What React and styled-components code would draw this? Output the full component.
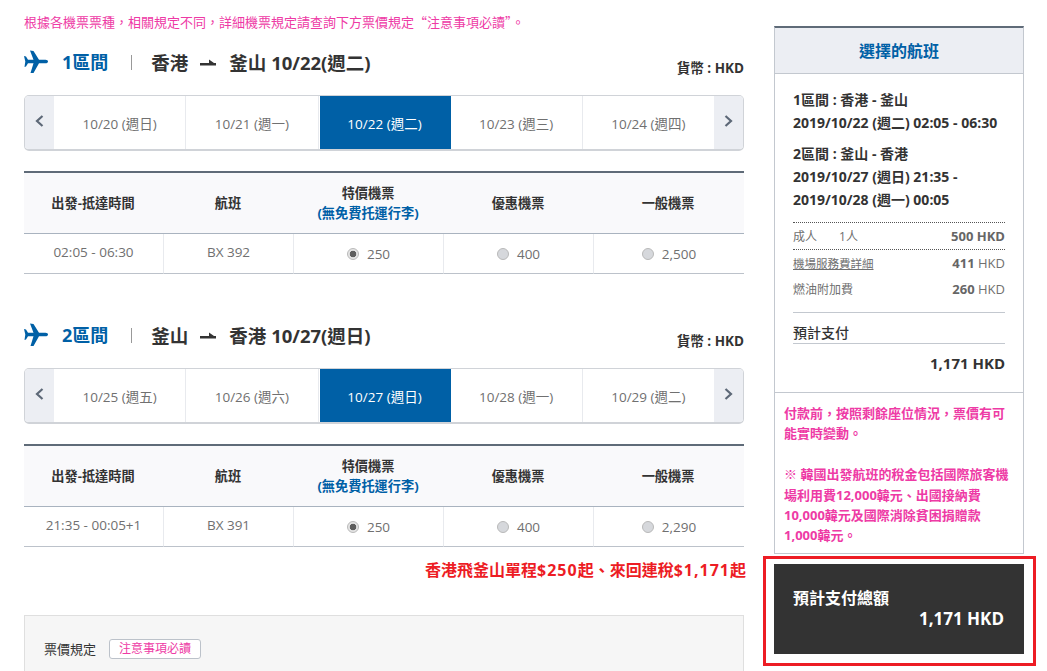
import React from "react";
import styled, { createGlobalStyle } from "styled-components";

const Global = createGlobalStyle`
  html, body { margin: 0; padding: 0; background: #fff; height: 671px; overflow: hidden; }
  body { font-family: "Open Sans", "Noto Sans CJK TC", sans-serif; color: #333; }
  * { box-sizing: border-box; }
`;

const Page = styled.div`
  display: flex;
  align-items: flex-start;
  width: 1047px;
  height: 671px;
  overflow: hidden;
  padding: 0 11px 0 24px;
`;
const Main = styled.main`
  width: 720px;
  flex: none;
`;
const Notice = styled.p`
  margin: 12px 0 0;
  font-family: "Noto Sans CJK TC", sans-serif;
  font-size: 13px;
  line-height: 19px;
  color: #ee3aa5;
`;
const Section = styled.section`
  margin-top: ${(p) => p.$top}px;
`;
const Head = styled.div`
  display: flex;
  align-items: center;
  height: 30px;
`;
const PlaneIcon = styled.svg`
  width: 25px;
  height: 24px;
  flex: none;
  color: #0060a6;
`;
const Segment = styled.h2`
  margin: 0 0 0 13px;
  font-size: 18px;
  line-height: 30px;
  font-weight: 700;
  color: #0060a6;
`;
const Divider = styled.span`
  width: 1px;
  height: 15px;
  margin: 0 19px 0 23px;
  background: #999;
`;
const Route = styled.div`
  display: flex;
  align-items: center;
  font-size: 18.5px;
  font-weight: 700;
  color: #333;
`;
const ArrowIcon = styled.svg`
  width: 16px;
  height: 7px;
  margin: 0 13px 0 12px;
`;
const Currency = styled.div`
  margin: -18px 0 0;
  text-align: right;
  font-size: 13.5px;
  line-height: 18px;
  font-weight: 700;
  color: #333;
`;
const DateBar = styled.div`
  display: flex;
  height: 56px;
  margin-top: 18px;
  border: 1px solid #d0d3d8;
  border-bottom-width: 2px;
  border-radius: 5px;
  overflow: hidden;
  background: #fff;
`;
const Nav = styled.div`
  width: 29px;
  flex: none;
  display: flex;
  align-items: center;
  justify-content: center;
  background: #eceef3;
  color: #5d6877;
  padding-bottom: 3px;
`;
const DateCell = styled.div`
  flex: ${(p) => (p.$active ? "0 0 131px" : "1")};
  margin-left: ${(p) => (p.$active ? "1px" : "0")};
  display: flex;
  align-items: center;
  justify-content: center;
  font-size: 13.5px;
  color: ${(p) => (p.$active ? "#fff" : "#707070")};
  background: ${(p) => (p.$active ? "#0060a6" : "#fff")};
  border-right: 1px solid ${(p) => (p.$active ? "#0060a6" : "#e8eaee")};
  &:nth-last-child(2) { border-right: 0; }
`;
const Table = styled.div`
  margin-top: 20px;
  border-top: 2px solid #5f6b78;
  display: grid;
  grid-template-columns: 140px 130px 150px 150px 150px;
`;
const HeadCell = styled.div`
  height: 61px;
  padding-right: 2px;
  display: flex;
  flex-direction: column;
  align-items: center;
  justify-content: center;
  background: #f9f9fb;
  border-bottom: 1px solid #a9b3bf;
  font-size: 13.2px;
  line-height: 20px;
  font-weight: 700;
  color: #333;
`;
const SubNote = styled.span`
  color: #0060a6;
  font-weight: 700;
`;
const Cell = styled.div`
  height: 40px;
  display: flex;
  align-items: center;
  justify-content: center;
  gap: 8px;
  font-size: 13.5px;
  color: #707070;
  border-bottom: 1px solid #bcc2ca;
  border-right: 1px solid #e8eaee;
  &:last-child { border-right: 0; }
`;
const CellText = styled.span`
  position: relative;
  top: ${(p) => p.$shift || 0}px;
`;
const Radio = styled.span`
  width: 12px;
  height: 12px;
  border-radius: 50%;
  flex: none;
  background: ${(p) => (p.$on ? "radial-gradient(circle, #5e5e5e 0 3px, #e4e4e4 3.6px)" : "#d6d8dc")};
  border: 1px solid #b9b9b9;
`;
const Promo = styled.div`
  margin-top: 11px;
  margin-right: -2px;
  text-align: right;
  font-size: 16px;
  line-height: 24px;
  font-weight: 700;
  color: #ed1c24;
`;
const Money = styled.span`
  letter-spacing: 1px;
`;
const RuleBox = styled.div`
  display: flex;
  align-items: center;
  height: 120px;
  margin-top: 33px;
  padding: 15px 20px 68px 19px;
  background: #f6f6f6;
  border: 1px solid #dfdfdf;
  font-size: 13px;
  line-height: 20px;
  color: #333;
`;
const RuleLink = styled.span`
  display: inline-flex;
  align-items: center;
  height: 20px;
  margin-left: 13px;
  padding: 0 9px;
  background: #fff;
  border: 1px solid #bcc2ca;
  border-radius: 3px;
  color: #ee3aa5;
  font-size: 12px;
`;
const Aside = styled.aside`
  width: 273px;
  margin-left: 19px;
  flex: none;
  padding-top: 26px;
`;
const Card = styled.div`
  margin: 0 12px 0 11px;
  height: 528px;
  border: 1px solid #c3c8cf;
  border-top: 2px solid #5f6b78;
`;
const CardTitle = styled.h3`
  margin: 0;
  height: 46px;
  padding-bottom: 2px;
  display: flex;
  align-items: center;
  justify-content: center;
  background: #eceef3;
  border-bottom: 1px solid #c3c8cf;
  font-size: 16px;
  font-weight: 700;
  color: #0060a6;
`;
const CardBody = styled.div`
  padding: 14px 18px 0;
  height: 319px;
  border-bottom: 1px solid #c3c8cf;
`;
const Trip = styled.div`
  margin-bottom: 8px;
  font-size: 14px;
  line-height: 23px;
  font-weight: 700;
  color: #333;
  white-space: nowrap;
`;
const FareTop = styled.div`
  display: flex;
  align-items: center;
  justify-content: space-between;
  height: 28px;
  margin-top: 11px;
  border-top: 1px dotted #555;
  border-bottom: 1px dotted #555;
  font-size: 12px;
  color: #707070;
`;
const FareRow = styled.div`
  display: flex;
  align-items: center;
  justify-content: space-between;
  height: 26px;
  font-size: 12px;
  color: #707070;
`;
const Adult = styled.span`
  display: inline-flex;
  gap: 22px;
`;
const Amount = styled.span`
  font-size: 13px;
`;
const Strong = styled.b`
  font-weight: 700;
  color: #666;
`;
const Linked = styled.span`
  font-size: 11.5px;
  text-decoration: underline;
`;
const SubtotalLabel = styled.div`
  margin-top: 10px;
  padding-top: 10px;
  height: 32px;
  border-top: 1px solid #c3c8cf;
  border-bottom: 1px solid #c3c8cf;
  font-size: 14px;
  line-height: 20px;
  font-weight: 500;
  color: #333;
`;
const SubtotalValue = styled.div`
  margin-top: 8px;
  text-align: right;
  font-size: 15px;
  line-height: 22px;
  font-weight: 700;
  color: #333;
`;
const Warn = styled.div`
  padding: 10px 9px 0;
  font-size: 13px;
  line-height: 20.2px;
  font-weight: 700;
  color: #ee3aa5;
`;
const WarnGap = styled.p`
  margin: 0 0 21px;
  width: 226px;
`;
const WarnLast = styled.p`
  margin: 0;
  width: 226px;
`;
const TotalFrame = styled.div`
  margin-top: 2px;
  height: 110px;
  padding: 5px 9px 0 8px;
  border: 3px solid #ed1c24;
`;
const TotalBox = styled.div`
  height: 90px;
  padding: 22px 20px 0 19px;
  background: #333;
  color: #fff;
  font-weight: 700;
`;
const TotalLabel = styled.div`
  font-size: 16px;
  line-height: 24px;
`;
const TotalValue = styled.div`
  margin-top: -2px;
  text-align: right;
  font-size: 17px;
  line-height: 22px;
`;

const Plane = () => (
  <PlaneIcon viewBox="0 0 25 24" fill="currentColor">
    <path d="M6 0.5 L9.5 1 L15 9.7 L21.5 9.7 C23 9.7 24 10.5 24 11.5 C24 12.5 23 13.3 21.5 13.3 L15 13.3 L9.5 23 L6.5 23 L9.5 13.3 L4 13.3 L2 16.5 L0.5 17 L1.3 11.5 L0 6 L2 6.5 L4 9.7 L9.5 9.7 Z" />
  </PlaneIcon>
);
const Arrow = () => (
  <ArrowIcon viewBox="0 0 16 7" fill="#333">
    <path d="M0 4 H9 V0.5 L14 4 H16 V6.5 H0 Z" />
  </ArrowIcon>
);
const Chevron = ({ dir }) => (
  <svg width="9" height="12" viewBox="0 0 9 12" fill="none" stroke="currentColor" strokeWidth="2.2">
    <path d={dir === "left" ? "M7.5 1 L2 6 L7.5 11" : "M1.5 1 L7 6 L1.5 11"} />
  </svg>
);

const Leg = ({ top, n, from, to, date, dates, active, time, flight, prices }) => (
  <Section $top={top}>
    <Head>
      <Plane />
      <Segment>{n}區間</Segment>
      <Divider />
      <Route>
        {from}
        <Arrow />
        {to} {date}
      </Route>
    </Head>
    <Currency>貨幣 : HKD</Currency>
    <DateBar>
      <Nav><Chevron dir="left" /></Nav>
      {dates.map((d, i) => (
        <DateCell key={d} $active={i === active}>{d}</DateCell>
      ))}
      <Nav><Chevron dir="right" /></Nav>
    </DateBar>
    <Table>
      <HeadCell>出發-抵達時間</HeadCell>
      <HeadCell>航班</HeadCell>
      <HeadCell>
        特價機票
        <SubNote>(無免費托運行李)</SubNote>
      </HeadCell>
      <HeadCell>優惠機票</HeadCell>
      <HeadCell>一般機票</HeadCell>
      <Cell><CellText $shift={-2}>{time}</CellText></Cell>
      <Cell><CellText $shift={-2}>{flight}</CellText></Cell>
      {prices.map((p, i) => (
        <Cell key={p}>
          <Radio $on={i === 0} />
          <CellText>{p}</CellText>
        </Cell>
      ))}
    </Table>
  </Section>
);

export default function App() {
  return (
    <Page>
      <Global />
      <Main>
        <Notice>根據各機票票種，相關規定不同，詳細機票規定請查詢下方票價規定“注意事項必讀”。</Notice>
        <Leg
          top={16}
          n={1}
          from="香港"
          to="釜山"
          date="10/22(週二)"
          dates={["10/20 (週日)", "10/21 (週一)", "10/22 (週二)", "10/23 (週三)", "10/24 (週四)"]}
          active={2}
          time="02:05 - 06:30"
          flight="BX 392"
          prices={["250", "400", "2,500"]}
        />
        <Leg
          top={46}
          n={2}
          from="釜山"
          to="香港"
          date="10/27(週日)"
          dates={["10/25 (週五)", "10/26 (週六)", "10/27 (週日)", "10/28 (週一)", "10/29 (週二)"]}
          active={2}
          time="21:35 - 00:05+1"
          flight="BX 391"
          prices={["250", "400", "2,290"]}
        />
        <Promo>香港飛釜山單程<Money>$250</Money>起、來回連稅<Money>$1,171</Money>起</Promo>
        <RuleBox>
          票價規定
          <RuleLink>注意事項必讀</RuleLink>
        </RuleBox>
      </Main>
      <Aside>
        <Card>
          <CardTitle>選擇的航班</CardTitle>
          <CardBody>
            <Trip>
              1區間 : 香港 - 釜山
              <br />
              2019/10/22 (週二) 02:05 - 06:30
            </Trip>
            <Trip>
              2區間 : 釜山 - 香港
              <br />
              2019/10/27 (週日) 21:35 -
              <br />
              2019/10/28 (週一) 00:05
            </Trip>
            <FareTop>
              <Adult><span>成人</span><span>1人</span></Adult>
              <Amount><Strong>500 HKD</Strong></Amount>
            </FareTop>
            <FareRow>
              <Linked>機場服務費詳細</Linked>
              <Amount><Strong>411</Strong> HKD</Amount>
            </FareRow>
            <FareRow>
              <span>燃油附加費</span>
              <Amount><Strong>260</Strong> HKD</Amount>
            </FareRow>
            <SubtotalLabel>預計支付</SubtotalLabel>
            <SubtotalValue>1,171 HKD</SubtotalValue>
          </CardBody>
          <Warn>
            <WarnGap>付款前，按照剩餘座位情況，票價有可能實時變動。</WarnGap>
            <WarnLast>※ 韓國出發航班的稅金包括國際旅客機場利用費12,000韓元、出國接納費10,000韓元及國際消除貧困捐贈款1,000韓元。</WarnLast>
          </Warn>
        </Card>
        <TotalFrame>
          <TotalBox>
            <TotalLabel>預計支付總額</TotalLabel>
            <TotalValue>1,171 HKD</TotalValue>
          </TotalBox>
        </TotalFrame>
      </Aside>
    </Page>
  );
}
